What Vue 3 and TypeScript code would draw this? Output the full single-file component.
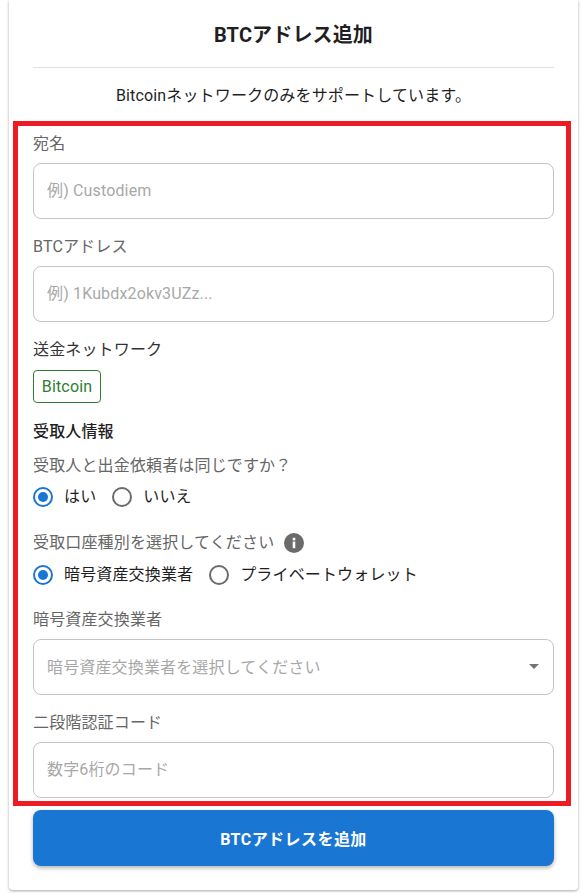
<script setup lang="ts">
import { ref } from 'vue'

const sameAsClient = ref('yes')
const accountType = ref('exchange')
</script>

<template>
  <div class="page">
    <div class="card">
      <h2 class="title">BTCアドレス追加</h2>
      <div class="divider"></div>
      <p class="notice">Bitcoinネットワークのみをサポートしています。</p>

      <div class="field first">
        <label class="label">宛名</label>
        <input class="input" placeholder="例) Custodiem" />
      </div>
      <div class="field">
        <label class="label">BTCアドレス</label>
        <input class="input" placeholder="例) 1Kubdx2okv3UZz..." />
      </div>

      <div class="network-title">送金ネットワーク</div>
      <span class="chip">Bitcoin</span>

      <div class="section-title">受取人情報</div>
      <div class="label question">受取人と出金依頼者は同じですか？</div>
      <div class="radios">
        <label class="radio" @click="sameAsClient = 'yes'">
          <span class="dot" :class="{ on: sameAsClient === 'yes' }"></span>はい
        </label>
        <label class="radio" @click="sameAsClient = 'no'">
          <span class="dot" :class="{ on: sameAsClient === 'no' }"></span>いいえ
        </label>
      </div>

      <div class="label question type">
        受取口座種別を選択してください
        <svg class="info" viewBox="0 0 20 20" width="20" height="20">
          <circle cx="10" cy="10" r="10" fill="#6b6b6b" />
          <rect x="8.7" y="8.6" width="2.6" height="6.6" fill="#fff" />
          <rect x="8.7" y="4.8" width="2.6" height="2.6" fill="#fff" />
        </svg>
      </div>
      <div class="radios">
        <label class="radio" @click="accountType = 'exchange'">
          <span class="dot" :class="{ on: accountType === 'exchange' }"></span>暗号資産交換業者
        </label>
        <label class="radio" @click="accountType = 'wallet'">
          <span class="dot" :class="{ on: accountType === 'wallet' }"></span>プライベートウォレット
        </label>
      </div>

      <div class="field exchange">
        <label class="label">暗号資産交換業者</label>
        <div class="input select">
          <span>暗号資産交換業者を選択してください</span>
          <i class="caret"></i>
        </div>
      </div>
      <div class="field">
        <label class="label">二段階認証コード</label>
        <input class="input" placeholder="数字6桁のコード" />
      </div>

      <button class="submit">BTCアドレスを追加</button>

      <!-- 赤枠の注釈 -->
      <div class="highlight"></div>
    </div>
  </div>
</template>

<style scoped>
.page {
  width: 583px;
  height: 893px;
  overflow: hidden;
  font-family: Roboto, "Noto Sans CJK JP", sans-serif;
  letter-spacing: 0.15px;
  color: #1f1f1f;
}

.card {
  position: relative;
  box-sizing: border-box;
  width: 569px;
  height: 890px;
  margin-left: 9px;
  padding: 0 24px;
  background: #fff;
  border-radius: 0 0 4px 4px;
  box-shadow: 0 1px 3px rgba(0, 0, 0, 0.35);
}

.title {
  margin: 0;
  padding-top: 21px;
  height: 67px;
  box-sizing: border-box;
  font-size: 20px;
  line-height: 28px;
  font-weight: 700;
  text-align: center;
}

.divider {
  height: 1px;
  background: #e0e0e0;
}

.notice {
  margin: 16px 0 0;
  font-size: 16px;
  line-height: 24px;
  text-align: center;
}

.field {
  margin-top: 18px;
}

.field.first {
  margin-top: 26px;
}

.field.exchange {
  margin-top: 23px;
}

.label {
  display: block;
  font-size: 16px;
  line-height: 20px;
  color: #666;
}

.input {
  display: block;
  box-sizing: border-box;
  width: 100%;
  height: 56px;
  margin-top: 9px;
  padding: 0 13px 2px;
  border: 1px solid #c4c4c4;
  border-radius: 8px;
  background: #fff;
  font: inherit;
  font-size: 16px;
  letter-spacing: 0.15px;
  outline: none;
}

.input::placeholder {
  color: #a8a8a8;
  opacity: 1;
}

.select {
  display: flex;
  align-items: center;
  justify-content: space-between;
  color: #a8a8a8;
}

.caret {
  width: 0;
  height: 0;
  margin-right: 1px;
  border-left: 5px solid transparent;
  border-right: 5px solid transparent;
  border-top: 5px solid #757575;
}

.network-title {
  margin-top: 18px;
  font-size: 16px;
  line-height: 20px;
  color: #333;
}

.chip {
  display: block;
  box-sizing: border-box;
  width: 68px;
  height: 33px;
  margin-top: 10px;
  border: 1px solid #2e7d32;
  border-radius: 4px;
  font-size: 16px;
  line-height: 31px;
  text-align: center;
  color: #2e7d32;
}

.section-title {
  margin-top: 19px;
  font-size: 16px;
  line-height: 20px;
  font-weight: 500;
}

.question {
  margin-top: 14px;
}

.question.type {
  display: flex;
  align-items: center;
  gap: 10px;
  margin-top: 24px;
}

.radios {
  display: flex;
  gap: 16px;
  margin-top: 9px;
  height: 24px;
}

.question.type + .radios {
  margin-top: 10px;
}

.radio {
  display: flex;
  align-items: center;
  gap: 11px;
  font-size: 16px;
  line-height: 24px;
}

.dot {
  position: relative;
  box-sizing: border-box;
  width: 20px;
  height: 20px;
  border: 2px solid #6b6b6b;
  border-radius: 50%;
}

.dot.on {
  border-color: #1976d2;
}

.dot.on::after {
  content: "";
  position: absolute;
  inset: 3px;
  border-radius: 50%;
  background: #1976d2;
}

.submit {
  display: block;
  width: 100%;
  height: 56px;
  margin-top: 12px;
  border: none;
  border-radius: 8px;
  background: #1976d2;
  box-shadow: 0 2px 4px rgba(0, 0, 0, 0.3);
  color: #fff;
  font: inherit;
  font-size: 16px;
  font-weight: 700;
  letter-spacing: 0.45px;
}

.highlight {
  position: absolute;
  left: 4px;
  top: 121px;
  width: 558px;
  height: 685px;
  box-sizing: border-box;
  border: 5px solid #ed1c24;
  pointer-events: none;
}
</style>
